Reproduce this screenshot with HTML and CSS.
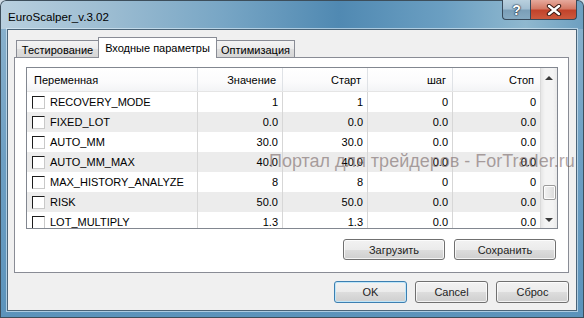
FILE: index.html
```html
<!DOCTYPE html>
<html lang="ru">
<head>
    <meta charset="UTF-8">
    <title>EuroScalper_v.3.02</title>
    <link rel="stylesheet" href="styles.css">
</head>
<body>
    <div class="window">
        <div class="titlebar">
            <span class="title">EuroScalper_v.3.02</span>
            <div class="caption-btns">
                <div class="cbtn help">?</div>
                <div class="cbtn close">
                    <svg width="16" height="12" viewBox="0 0 16 12">
                        <path d="M3 2 L13 10 M13 2 L3 10" stroke="#3a1a14" stroke-width="4.4" stroke-linecap="round"/>
                        <path d="M3 2 L13 10 M13 2 L3 10" stroke="#fff" stroke-width="2.4" stroke-linecap="round"/>
                    </svg>
                </div>
            </div>
        </div>

        <div class="client">
            <div class="tabs">
                <div class="tab first">Тестирование</div>
                <div class="tab active">Входные параметры</div>
                <div class="tab last">Оптимизация</div>
            </div>

            <div class="panel">
                <div class="list">
                    <div class="grid">
                        <div class="row head">
                            <div class="cell name">Переменная</div>
                            <div class="cell">Значение</div>
                            <div class="cell">Старт</div>
                            <div class="cell">шаг</div>
                            <div class="cell">Стоп</div>
                        </div>
                        <div class="row">
                            <div class="cell name"><span class="check"></span>RECOVERY_MODE</div>
                            <div class="cell">1</div><div class="cell">1</div><div class="cell">0</div><div class="cell">0</div>
                        </div>
                        <div class="row alt">
                            <div class="cell name"><span class="check"></span>FIXED_LOT</div>
                            <div class="cell">0.0</div><div class="cell">0.0</div><div class="cell">0.0</div><div class="cell">0.0</div>
                        </div>
                        <div class="row">
                            <div class="cell name"><span class="check"></span>AUTO_MM</div>
                            <div class="cell">30.0</div><div class="cell">30.0</div><div class="cell">0.0</div><div class="cell">0.0</div>
                        </div>
                        <div class="row alt">
                            <div class="cell name"><span class="check"></span>AUTO_MM_MAX</div>
                            <div class="cell">40.0</div><div class="cell">40.0</div><div class="cell">0.0</div><div class="cell">0.0</div>
                        </div>
                        <div class="row">
                            <div class="cell name"><span class="check"></span>MAX_HISTORY_ANALYZE</div>
                            <div class="cell">8</div><div class="cell">8</div><div class="cell">0</div><div class="cell">0</div>
                        </div>
                        <div class="row alt">
                            <div class="cell name"><span class="check"></span>RISK</div>
                            <div class="cell">50.0</div><div class="cell">50.0</div><div class="cell">0.0</div><div class="cell">0.0</div>
                        </div>
                        <div class="row">
                            <div class="cell name"><span class="check"></span>LOT_MULTIPLY</div>
                            <div class="cell">1.3</div><div class="cell">1.3</div><div class="cell">0.0</div><div class="cell">0.0</div>
                        </div>
                    </div>
                    <div class="vscroll">
                        <div class="arrow up"></div>
                        <div class="thumb"></div>
                        <div class="arrow down"></div>
                    </div>
                </div>
                <div class="panel-btns">
                    <button class="btn wide">Загрузить</button>
                    <button class="btn wide">Сохранить</button>
                </div>
            </div>

            <div class="dlg-btns">
                <button class="btn default">OK</button>
                <button class="btn">Cancel</button>
                <button class="btn">Сброс</button>
            </div>
        </div>

        <div class="watermark">Портал для трейдеров - ForTrader.ru</div>
    </div>
</body>
</html>
```

FILE: styles.css
```css
* {
    margin: 0;
    padding: 0;
    box-sizing: border-box;
}

body {
    width: 584px;
    height: 318px;
    overflow: hidden;
    background-color: #cfdbe4;
    font-family: 'Liberation Sans', Arial, sans-serif;
    font-size: 11px;
    color: #000;
}

.window {
    position: relative;
    width: 584px;
    height: 318px;
    display: flex;
    flex-direction: column;
    border-radius: 6px 6px 0 0;
    background:
        linear-gradient(90deg, #b9d0df 0%, #9dbdd2 18%, #78a6c5 38%, #5089b2 58%, #6b9fc2 76%, #8fb8cf 90%, #6d9fc0 100%) top / 100% 29px no-repeat,
        linear-gradient(#8db4ce 0%, #6d9fc3 50%, #5b93bb 100%);
    box-shadow: inset 0 0 0 1px #3d4e5b;
    overflow: hidden;
}

/* title bar */

.titlebar {
    height: 29px;
    display: flex;
    flex-shrink: 0;
}

.title {
    padding: 10px 0 0 8px;
    font-size: 11.6px;
    line-height: 14px;
}

.caption-btns {
    margin-left: auto;
    margin-right: 7px;
    display: flex;
    height: 20px;
}

.cbtn {
    height: 20px;
    border: 1px solid #37495a;
    border-top: none;
    display: flex;
    align-items: center;
    justify-content: center;
}

.help {
    width: 28px;
    border-right: none;
    border-radius: 0 0 0 4px;
    background: linear-gradient(#b9d0de 0%, #a3bfd2 45%, #7b9fb8 55%, #86aac2 100%);
    color: #fff;
    font-weight: bold;
    font-size: 14px;
    text-shadow: 0 0 1px #223344, 0 0 1px #223344, 0 0 2px #223344;
}

.close {
    width: 47px;
    border-radius: 0 0 4px 0;
    background: linear-gradient(#e6a99c 0%, #d47a66 45%, #c2432b 55%, #cc5a3e 100%);
}

/* client area */

.client {
    margin: 0 7px;
    height: 282px;
    border: 1px solid #4a6478;
    background-color: #f0f0f0;
    box-shadow: 0 0 0 1px rgba(225, 240, 250, 0.6);
    display: flex;
    flex-direction: column;
}

.tabs {
    display: flex;
    align-items: flex-end;
    height: 28px;
    padding-left: 8px;
}

.tab {
    height: 18px;
    border: 1px solid #898c95;
    border-bottom: none;
    background: linear-gradient(#f3f3f3 0%, #ebebeb 50%, #dedede 50%, #d5d5d5 100%);
    display: flex;
    align-items: center;
    justify-content: center;
    padding-top: 1px;
}

.tab.first {
    width: 83px;
}

.tab.active {
    position: relative;
    z-index: 1;
    width: 119px;
    height: 21px;
    margin-left: -1px;
    background: #fff;
    padding-top: 0;
    padding-bottom: 1px;
}

.tab.last {
    width: 79px;
    margin-left: -1px;
}

.panel {
    margin: -1px 7px 0 6px;
    height: 216px;
    border: 1px solid #898c95;
    background-color: #fff;
    padding: 9px 10px 0 11px;
}

/* list view */

.list {
    height: 162px;
    border: 1px solid #828790;
    display: flex;
}

.grid {
    width: 513px;
    overflow: hidden;
}

.row {
    display: grid;
    grid-template-columns: 171px 85px 85px 85px 87px;
    height: 20px;
}

.row.alt {
    background-color: #ececec;
}

.row.head {
    height: 24px;
    background: linear-gradient(#ffffff 0%, #fbfbfc 60%, #f3f4f6 100%);
    border-bottom: 1px solid #e5e5e5;
}

.cell {
    display: flex;
    align-items: center;
    justify-content: flex-end;
    padding-right: 4px;
    border-right: 1px solid #d7d7d7;
    white-space: nowrap;
}

.cell:last-child {
    border-right: none;
}

.head .cell {
    padding-right: 6px;
    border-right-color: #dfe2e6;
}

.cell.name {
    justify-content: flex-start;
    padding-left: 5px;
}

.head .cell.name {
    padding-left: 7px;
}

.check {
    width: 13px;
    height: 13px;
    margin-right: 5px;
    background-color: #fff;
    border-top: 1px solid #1c1c1c;
    border-left: 1px solid #1c1c1c;
    border-right: 1px solid #c9c9c9;
    border-bottom: 1px solid #c9c9c9;
}

.vscroll {
    width: 17px;
    border-left: 1px solid #dadada;
    background: linear-gradient(90deg, #e6e6e6, #f4f4f4 25%, #f4f4f4 75%, #e9e9e9);
    display: flex;
    flex-direction: column;
    align-items: center;
}

.arrow {
    height: 17px;
    width: 16px;
    display: flex;
    align-items: center;
    justify-content: center;
}

.arrow::after {
    content: '';
    border-left: 4px solid transparent;
    border-right: 4px solid transparent;
}

.arrow.up::after {
    border-bottom: 4px solid #3a3a3a;
    margin-top: 3px;
}

.arrow.down {
    margin-top: auto;
}

.arrow.down::after {
    border-top: 4px solid #3a3a3a;
}

.thumb {
    margin-top: 100px;
    width: 13px;
    height: 15px;
    border: 1px solid #9b9b9b;
    border-radius: 2px;
    background: linear-gradient(90deg, #f3f3f3, #e8e8e8 50%, #d9d9d9);
    box-shadow: inset 0 0 0 1px #fdfdfd;
}

/* buttons */

.panel-btns {
    display: flex;
    justify-content: flex-end;
    gap: 9px;
    margin-top: 10px;
    margin-right: 2px;
}

.dlg-btns {
    display: flex;
    justify-content: flex-end;
    gap: 8px;
    margin: 8px 7px 0 0;
}

.btn {
    width: 73px;
    height: 22px;
    font-family: inherit;
    font-size: 11px;
    font-weight: normal;
    color: #1e1e1e;
    border: 1px solid #707070;
    border-radius: 3px;
    background: linear-gradient(#f2f2f2 0%, #ebebeb 50%, #dddddd 50%, #cfcfcf 100%);
    box-shadow: inset 0 0 0 1px rgba(255, 255, 255, 0.75);
}

.btn.wide {
    width: 102px;
    height: 21px;
}

.btn.default {
    border-color: #3c7fb1;
    box-shadow: inset 0 0 0 1px #bfe6f9;
}

.watermark {
    position: absolute;
    left: 269px;
    top: 151px;
    font-size: 18px;
    color: rgba(95, 75, 75, 0.5);
    white-space: nowrap;
    pointer-events: none;
}
```
